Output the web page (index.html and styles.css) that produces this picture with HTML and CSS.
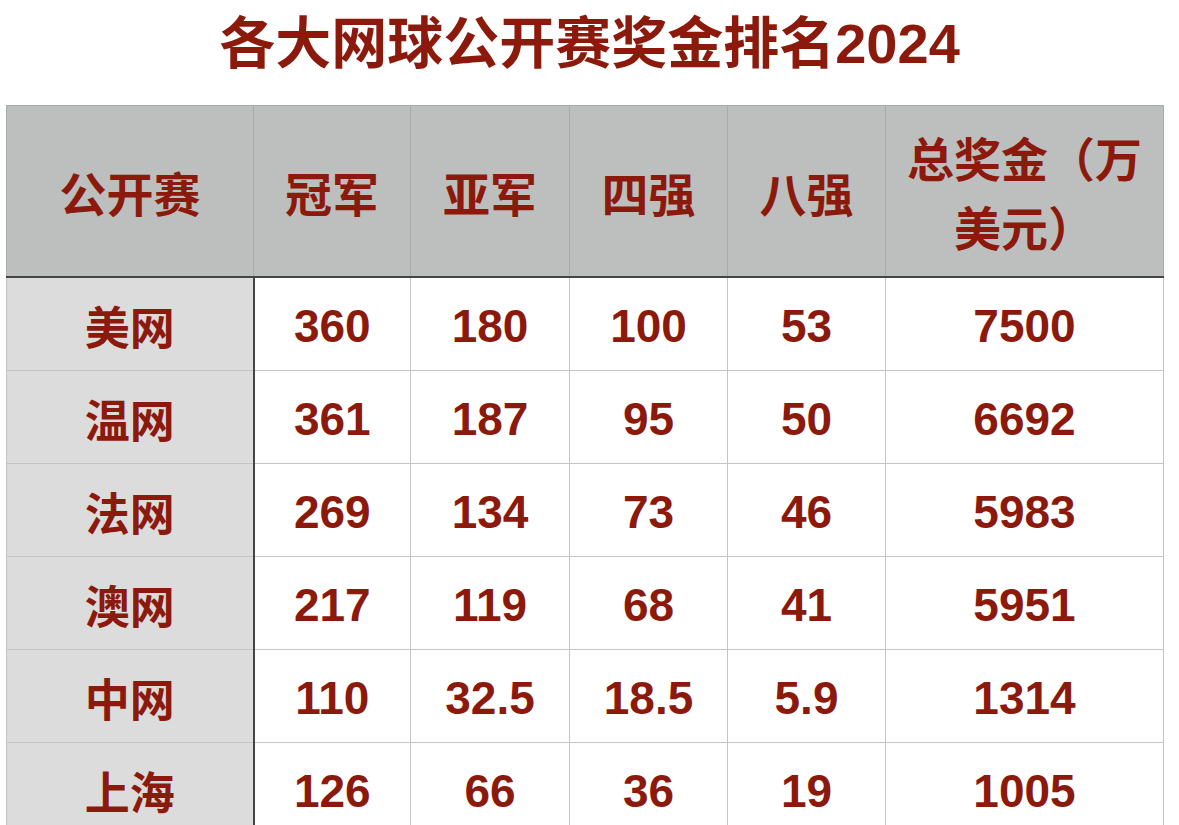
FILE: index.html
```html
<!DOCTYPE html>
<html lang="zh-CN">
<head>
<meta charset="utf-8">
<title>各大网球公开赛奖金排名2024</title>
<link rel="stylesheet" href="styles.css">
</head>
<body>
<h1 class="title">各大网球公开赛奖金排名2024</h1>
<table class="prize">
  <colgroup>
    <col class="c1"><col class="c2"><col class="c3"><col class="c4"><col class="c5"><col class="c6">
  </colgroup>
  <thead>
    <tr>
      <th>公开赛</th>
      <th>冠军</th>
      <th>亚军</th>
      <th>四强</th>
      <th>八强</th>
      <th class="total">总奖金（万<br>美元）</th>
    </tr>
  </thead>
  <tbody>
    <tr><td class="name">美网</td><td>360</td><td>180</td><td>100</td><td>53</td><td>7500</td></tr>
    <tr><td class="name">温网</td><td>361</td><td>187</td><td>95</td><td>50</td><td>6692</td></tr>
    <tr><td class="name">法网</td><td>269</td><td>134</td><td>73</td><td>46</td><td>5983</td></tr>
    <tr><td class="name">澳网</td><td>217</td><td>119</td><td>68</td><td>41</td><td>5951</td></tr>
    <tr><td class="name">中网</td><td>110</td><td>32.5</td><td>18.5</td><td>5.9</td><td>1314</td></tr>
    <tr><td class="name">上海</td><td>126</td><td>66</td><td>36</td><td>19</td><td>1005</td></tr>
  </tbody>
</table>
</body>
</html>
```
FILE: styles.css
```css
html, body {
  margin: 0;
  padding: 0;
  background: #ffffff;
}
body {
  overflow: hidden;
  height: 825px;
  color: #8c1a0c;
  font-family: "Liberation Sans", "Noto Sans CJK SC", sans-serif;
}
.title {
  margin: 0;
  height: 105px;
  box-sizing: border-box;
  padding-top: 11px;
  text-align: center;
  font-family: "Liberation Sans", "Noto Sans CJK SC", sans-serif;
  font-weight: 700;
  font-size: 56px;
  line-height: 66px;
  letter-spacing: 0;
}
.prize {
  margin-left: 6px;
  border-collapse: collapse;
  table-layout: fixed;
  width: 1157px;
}
.c1 { width: 247px; }
.c2 { width: 157px; }
.c3 { width: 159px; }
.c4 { width: 158px; }
.c5 { width: 158px; }
.c6 { width: 278px; }
.prize th, .prize td {
  border: 1px solid #c4c4c4;
  text-align: center;
  vertical-align: middle;
  padding: 0 6px;
}
.prize thead th {
  background: #bdbfbe;
  border-color: #a9abaa;
  height: 170px;
  font-family: "Noto Sans CJK SC", sans-serif;
  font-weight: 700;
  font-size: 47px;
  line-height: 69px;
  border-bottom: 2px solid #454545;
}
.prize td {
  height: 88px;
  font-family: "Liberation Sans", sans-serif;
  font-weight: 700;
  font-size: 46px;
  line-height: 50px;
  padding-top: 4px;
}
.prize td.name {
  background: #dcdcdc;
  font-family: "Noto Sans CJK SC", sans-serif;
  font-size: 45px;
  border-right: 2px solid #454545;
}
```
